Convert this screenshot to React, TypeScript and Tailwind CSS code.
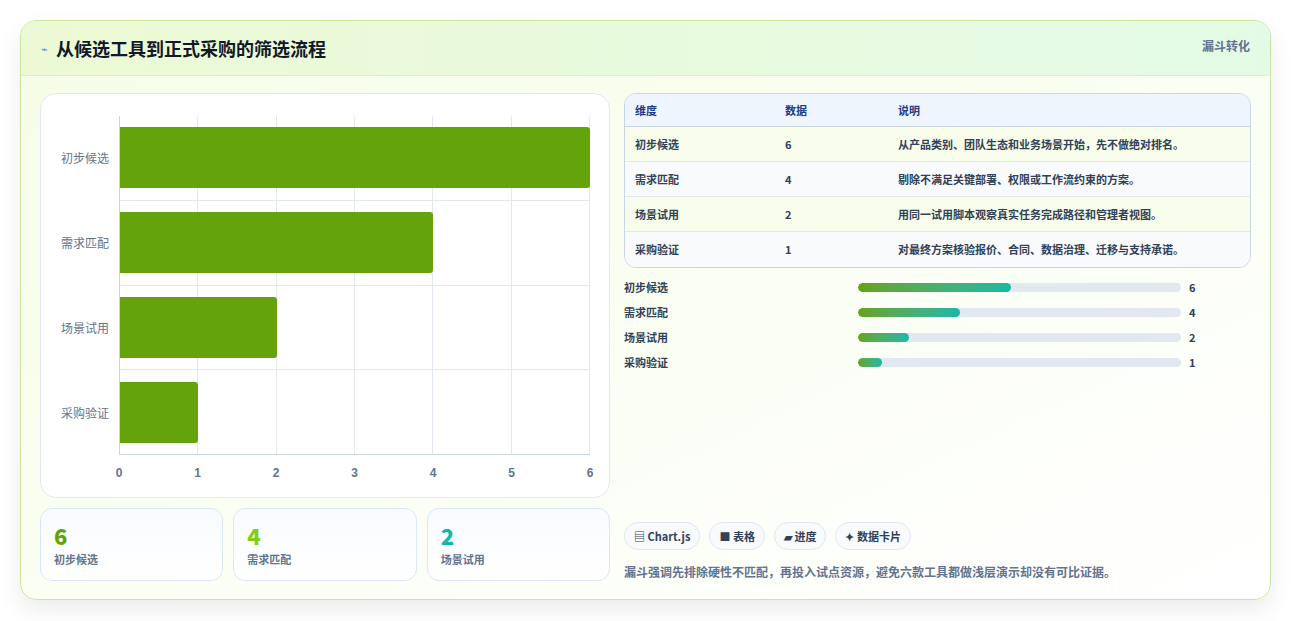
const font = { fontFamily: '"Noto Sans CJK SC", "Noto Sans", sans-serif' };

const rows = [
  { name: '初步候选', v: 6, note: '从产品类别、团队生态和业务场景开始，先不做绝对排名。' },
  { name: '需求匹配', v: 4, note: '剔除不满足关键部署、权限或工作流约束的方案。' },
  { name: '场景试用', v: 2, note: '用同一试用脚本观察真实任务完成路径和管理者视图。' },
  { name: '采购验证', v: 1, note: '对最终方案核验报价、合同、数据治理、迁移与支持承诺。' },
];

const Chart = () => (
  <div className="h-[405px] rounded-2xl border border-slate-200 bg-white pt-[22px] pr-[19px] flex flex-col">
    <div className="flex h-[339px]">
      <div className="w-[78px] flex flex-col">
        {rows.map(r => (
          <div key={r.name} className="flex-1 flex items-center justify-end pr-[10px] text-[12px] text-slate-500">{r.name}</div>
        ))}
      </div>
      <div className="relative flex-1 border-l border-b border-slate-300">
        <div className="absolute inset-0 grid grid-cols-6">
          {[0, 1, 2, 3, 4, 5].map(i => <div key={i} className="border-r border-slate-200" />)}
        </div>
        <div className="absolute inset-0 flex flex-col">
          {rows.map((r, i) => (
            <div key={r.name} className={`flex-1 flex items-center ${i < 3 ? 'border-b border-slate-200' : ''}`}>
              <div className="h-[61px] bg-[#65a30d] rounded-r-[3px]" style={{ width: `${(r.v / 6) * 100}%` }} />
            </div>
          ))}
        </div>
      </div>
    </div>
    <div className="flex pl-[78px] mt-[9px]">
      <div className="relative flex-1 h-4 text-[12px] font-semibold text-slate-500" style={{ fontFamily: '"Liberation Sans", sans-serif' }}>
        {[0, 1, 2, 3, 4, 5, 6].map(i => (
          <span key={i} className="absolute -translate-x-1/2" style={{ left: `${(i / 6) * 100}%` }}>{i}</span>
        ))}
      </div>
    </div>
  </div>
);

export default function App() {
  return (
    <div className="min-h-[621px] bg-white pt-5 px-5" style={font}>
      <div className="rounded-2xl border border-[#cbe89a] bg-gradient-to-br from-[#f5fde6] to-white shadow-[0_10px_25px_rgba(0,0,0,0.08)] overflow-hidden">
        <div className="h-[55px] flex items-center justify-between px-[20px] bg-gradient-to-r from-[#ecf9d4] to-[#e3fbe6] border-b border-[#dcefc6]">
          <div className="flex items-center gap-[8px]">
            <span className="text-[11px] text-[#3b82f6]">⌁</span>
            <h1 className="text-[18px] font-bold text-[#111827]">从候选工具到正式采购的筛选流程</h1>
          </div>
          <span className="self-start mt-[16px] text-[12px] font-semibold text-slate-500">漏斗转化</span>
        </div>
        <div className="flex gap-[14px] px-[19px] pt-[17px] pb-[18px]">
          <div className="w-[570px] flex flex-col gap-[10px]">
            <Chart />
            <div className="grid grid-cols-3 gap-[10px]">
              {[['6', 'text-[#65a30d]', '初步候选'], ['4', 'text-[#84cc16]', '需求匹配'], ['2', 'text-[#14b8a6]', '场景试用']].map(([n, c, l]) => (
                <div key={l} className="h-[73px] rounded-xl border border-[#dbe7f5] bg-gradient-to-b from-[#f8fbff] to-white px-[13px] pt-[12px]">
                  <div className={`text-[22px] leading-[28px] font-extrabold ${c}`}>{n}</div>
                  <div className="text-[11px] font-semibold text-slate-500 mt-[2px]">{l}</div>
                </div>
              ))}
            </div>
          </div>
          <div className="flex-1 flex flex-col">
            <div className="rounded-xl border border-slate-300 overflow-hidden text-[11px] font-semibold">
              <div className="grid grid-cols-[150px_113px_1fr] h-[33px] items-center px-[10px] bg-[#eef5fd] text-[#1e3a8a] border-b border-slate-300">
                <span>维度</span><span>数据</span><span>说明</span>
              </div>
              {rows.map((r, i) => (
                <div key={r.name} className={`grid grid-cols-[150px_113px_1fr] h-[35px] items-center px-[10px] text-slate-700 ${i % 2 ? 'bg-[#f8fafc]' : 'bg-[#f7fdea]'} ${i < 3 ? 'border-b border-slate-200' : ''}`}>
                  <span>{r.name}</span><span>{r.v}</span><span>{r.note}</span>
                </div>
              ))}
            </div>
            <div className="mt-[12px] flex flex-col gap-[11px] text-[11px] font-semibold text-slate-700">
              {rows.map(r => (
                <div key={r.name} className="flex items-center h-[14px]">
                  <span className="w-[234px]">{r.name}</span>
                  <div className="w-[323px] h-[9px] rounded-full bg-slate-200 overflow-hidden">
                    <div className="h-full rounded-full bg-gradient-to-r from-[#65a30d] to-[#14b8a6]" style={{ width: `${r.v === 1 ? 7.5 : (r.v / 12.7) * 100}%` }} />
                  </div>
                  <span className="ml-[8px]">{r.v}</span>
                </div>
              ))}
            </div>
            <div className="mt-auto flex gap-[9px] text-[11px] font-semibold text-slate-700">
              {['▤ Chart.js', '■ 表格', '▰ 进度', '✦ 数据卡片'].map(t => (
                <span key={t} className="h-[28px] px-[9px] flex items-center rounded-full border border-slate-200 bg-slate-50">{t}</span>
              ))}
            </div>
            <p className="mt-[13px] text-[12px] font-semibold text-slate-500">漏斗强调先排除硬性不匹配，再投入试点资源，避免六款工具都做浅层演示却没有可比证据。</p>
          </div>
        </div>
      </div>
    </div>
  );
}
